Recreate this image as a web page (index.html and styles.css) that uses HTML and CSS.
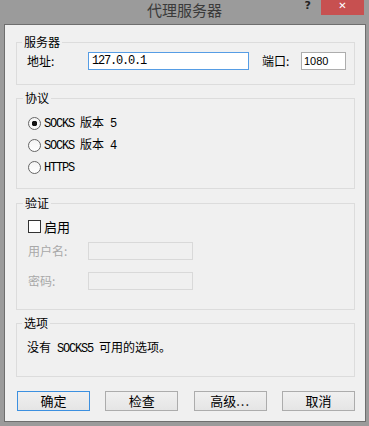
FILE: index.html
```html
<!DOCTYPE html>
<html lang="zh-CN">
<head>
    <meta charset="UTF-8">
    <title>代理服务器</title>
    <link rel="stylesheet" href="styles.css">
</head>
<body>
    <div class="window">
        <div class="titlebar">
            <span></span>
            <div class="title">代理服务器</div>
            <div class="controls">
                <span class="help">?</span>
                <span class="close">&#x2715;</span>
            </div>
        </div>

        <div class="dialog">
            <fieldset class="group server">
                <legend>服务器</legend>
                <div class="row">
                    <label class="lbl addr">地址:</label>
                    <input type="text" class="field host focus" value="127.0.0.1">
                    <label class="lbl port-lbl">端口:</label>
                    <input type="text" class="field port" value="1080">
                </div>
            </fieldset>

            <fieldset class="group proto">
                <legend>协议</legend>
                <label class="opt"><input type="radio" name="proto" checked><span class="mono">SOCKS <span class="cjk">版本</span> 5</span></label>
                <label class="opt"><input type="radio" name="proto"><span class="mono">SOCKS <span class="cjk">版本</span> 4</span></label>
                <label class="opt"><input type="radio" name="proto"><span class="mono">HTTPS</span></label>
            </fieldset>

            <fieldset class="group auth">
                <legend>验证</legend>
                <label class="opt check"><input type="checkbox"><span>启用</span></label>
                <div class="row user">
                    <label class="lbl off">用户名:</label>
                    <input type="text" class="field small" disabled>
                </div>
                <div class="row pass">
                    <label class="lbl off">密码:</label>
                    <input type="password" class="field small" disabled>
                </div>
            </fieldset>

            <fieldset class="group options">
                <legend>选项</legend>
                <p class="note">没有<span class="mono"> SOCKS5 </span>可用的选项。</p>
            </fieldset>

            <div class="buttons">
                <button class="default">确定</button>
                <button>检查</button>
                <button>高级<span class="dots">...</span></button>
                <button>取消</button>
            </div>
        </div>
    </div>
</body>
</html>
```

FILE: styles.css
```css
html, body {
    margin: 0;
    padding: 0;
}
body {
    width: 369px;
    height: 426px;
    overflow: hidden;
    background: #9b9b9b;
    font-family: "Noto Sans CJK SC", "Liberation Sans", sans-serif;
    font-size: 12px;
    color: #000;
}
.titlebar {
    height: 24px;
    display: grid;
    grid-template-columns: 1fr auto 1fr;
}
.title {
    font-size: 15px;
    line-height: 20px;
    color: #3a3a3a;
}
.controls {
    display: flex;
    justify-content: flex-end;
    align-items: flex-start;
    padding-right: 5px;
}
.help {
    font-family: "DejaVu Sans", sans-serif;
    font-weight: bold;
    font-size: 11px;
    line-height: 12px;
    color: #222;
    margin-right: 10px;
}
.close {
    width: 43px;
    height: 15px;
    background: #c75050;
    color: #fff;
    font-family: "DejaVu Sans", sans-serif;
    font-size: 10px;
    font-weight: bold;
    line-height: 12px;
    text-align: center;
}
.dialog {
    margin: 0 3px 0 4px;
    height: 396px;
    border: 1px solid #6e6e6e;
    background: #f0f0f0;
    padding: 0 10px 0 11px;
    display: flex;
    flex-direction: column;
}
.group {
    margin: 0;
    padding: 0 0 0 10px;
    border: 1px solid #dcdcdc;
    min-width: 0;
}
.group legend {
    margin-left: -5px;
    padding: 0 2px;
    line-height: 14px;
    font-size: 12px;
}
.server {
    margin-top: 10px;
    padding-top: 3px;
    padding-bottom: 14px;
}
.proto {
    margin-top: 6px;
    padding-top: 7px;
    padding-bottom: 9px;
    padding-left: 11px;
}
.auth {
    margin-top: 7px;
    padding-top: 9px;
    padding-bottom: 19px;
    padding-left: 11px;
}
.options {
    margin-top: 6px;
    padding-top: 10px;
    padding-bottom: 20px;
}
.row {
    display: flex;
    align-items: center;
    height: 18px;
}
.lbl {
    width: 61px;
    line-height: 14px;
}
.auth .lbl {
    width: 60px;
}
.port-lbl {
    width: 39px;
    margin-left: 13px;
}
.off {
    color: #a8a8a8;
}
.field {
    box-sizing: border-box;
    height: 18px;
    margin: 0;
    padding: 0 3px;
    border: 1px solid #adadad;
    background: #fff;
    font-family: "Liberation Mono", monospace;
    font-size: 12px;
    letter-spacing: -1.2px;
    color: #000;
    outline: none;
}
.host {
    width: 161px;
}
.focus {
    border-color: #569de5;
}
.port {
    width: 45px;
    font-family: "Liberation Sans", sans-serif;
    font-size: 11px;
    letter-spacing: 0;
    padding: 0 2px;
}
.small {
    width: 105px;
    background: #f0f0f0;
    border-color: #d9d9d9;
}
.user {
    margin-top: 8px;
}
.pass {
    margin-top: 12px;
}
.opt {
    display: flex;
    align-items: center;
    height: 22px;
    line-height: 14px;
}
.opt input {
    appearance: none;
    -webkit-appearance: none;
    box-sizing: border-box;
    width: 13px;
    height: 13px;
    margin: 0 3px 0 0;
    border: 1px solid #555;
    background: linear-gradient(#f4f4f4, #fff);
    flex: none;
}
.opt input[type="radio"] {
    border-radius: 50%;
    border-color: #666;
}
.opt input[type="radio"]:checked {
    background: radial-gradient(circle, #111 0 2.6px, #f6f6f6 3px);
}
.proto .opt:nth-of-type(3) {
    height: 23px;
}
.check {
    height: 15px;
}
.check input {
    border-color: #333;
    background: #fff;
}
.check span {
    font-size: 13px;
}
.mono {
    font-family: "Liberation Mono", "Noto Sans CJK SC", monospace;
    font-size: 12px;
    letter-spacing: -1.2px;
    white-space: pre;
}
.mono .cjk {
    font-family: "Noto Sans CJK SC", sans-serif;
    font-size: 12px;
    letter-spacing: 0;
}
.note {
    margin: 0;
    line-height: 14px;
}
.buttons {
    display: flex;
    justify-content: space-between;
    margin-top: 14px;
    padding-left: 1px;
}
.buttons button {
    box-sizing: border-box;
    width: 73px;
    height: 20px;
    margin: 0;
    padding: 0;
    border: 1px solid #acacac;
    background: linear-gradient(#f0f0f0, #e5e5e5);
    font-family: "Noto Sans CJK SC", sans-serif;
    font-size: 13px;
    line-height: 16px;
    color: #000;
}
.buttons .dots {
    letter-spacing: 1px;
}
.buttons button.default {
    border-color: #3c90e0;
}
```
